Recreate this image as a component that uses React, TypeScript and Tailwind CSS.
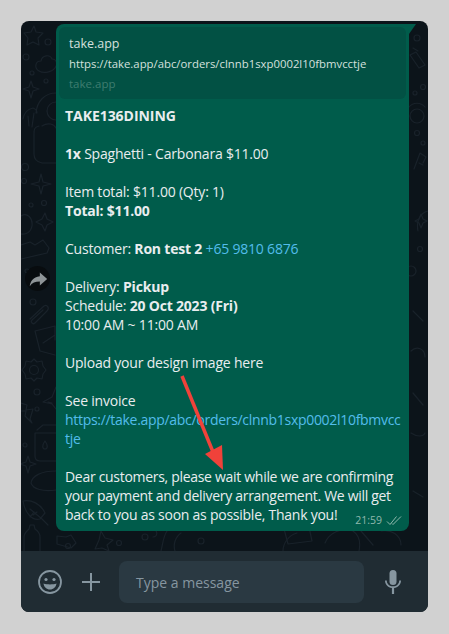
import React from 'react';

const Link = ({ children }: { children: React.ReactNode }) => (
  <span className="text-[#53bdeb]">{children}</span>
);

// faint wallpaper, only the strips around the bubble are visible
const Doodles = () => (
  <svg className="absolute inset-0 h-full w-full" viewBox="0 0 407 530" fill="none" stroke="#19222a" strokeWidth="1.2" strokeLinejoin="round" strokeLinecap="round">
    <path d="M13 5l2 6 7 1-5 5 1 7-6-3-6 3 1-7-4-5 7-1z" />
    <circle cx="27" cy="21" r="3" />
    <circle cx="5" cy="36" r="3" />
    <path d="M18 50c-5-3-4-10 2-10 1-6 9-7 11-2 5 0 6 6 3 9-3 4-11 6-16 3z" />
    <circle cx="11" cy="52" r="2" />
    <circle cx="25" cy="60" r="2" />
    <path d="M10 60l2 6 6 2-6 2-2 7-2-7-6-2 6-2z" />
    <path d="M15 92c1-12 9-20 20-20M2 98c1-6 5-10 10-11 3 1 4 3 4 5M7 95l1 10M13 92l-2 14M18 105c-5 1-5 4-5 8v20c0 5 3 8 8 9h14M21 105c6-4 12-2 14 2" />
    <circle cx="35" cy="90" r="9" />
    <circle cx="4" cy="146" r="3.500" />
    <circle cx="3" cy="160" r="2.500" />
    <path d="M20 153l2 8 8 2-8 2-2 8-2-8-8-2 8-2z" />
    <circle cx="10" cy="184" r="2" />
    <circle cx="23" cy="182" r="2.500" />
    <path d="M24 192l2 6 6 3-6 3-2 6-3-6-6-3 6-3z" />
    <path d="M0 195c6-4 12 2 11 10-1 6-6 9-11 8M0 224l9-3 5 3 8-5 6 8-2 5-26 6" />
    <circle cx="6" cy="250" r="2" />
    <circle cx="17" cy="248" r="2" />
    <circle cx="12" cy="281" r="3" />
    <path d="M9 298l14-13c3-2 6 2 3 5l-12 12c-2 2-5-1-3-3l11-10" />
    <path d="M14 310l20-5v14M14 310l5 20 15 4M22 322l12-8" />
    <circle cx="13" cy="349" r="4.500" />
    <path d="M13 338l3 3 5-1 1 5 3 4-3 4-1 5-5-1-3 3-3-3-5 1-1-5-3-4 3-4 1-5 5 1z" />
    <circle cx="16" cy="371" r="3" />
    <path d="M35 366l-4 10-9 5 9 2 4 5M27 381l4 1" />
    <path d="M0 382l6 2-1 5 7-1-3 10 2 4-7-7 1-5-5 0" />
    <circle cx="16" cy="388" r="2" />
    <path d="M16 409l6-5h13M14 412h21M14 412v23c0 3 2 5 5 5h16M24 420c-3 4-3 8 0 8s3-4 0-8z" />
    <circle cx="4" cy="424" r="2" />
    <path d="M7 435l2 6 6 2-6 2-2 7-2-7-6-2 6-2z" />
    <path d="M10 462c1-7 10-12 25-12M10 462c2 6 12 9 25 7" />
    <path d="M2 480c8-2 18 3 22 12l-5 6c-8 2-15-6-17-18zM9 488l12 10M21 498l6 6M12 494l4-3M13 491l-4 5" />
    <path d="M3 530v-14c0-4 3-6 5-8l1-4h4l1 4c3 2 5 4 5 8v14" />
    <circle cx="396" cy="17" r="3" />
    <path d="M389 34l6-3 9 13-6 3zM392 27l5 3" />
    <circle cx="402" cy="66" r="2.500" />
    <circle cx="394" cy="72" r="2" />
    <circle cx="396" cy="95" r="7" />
    <path d="M388 86c4-5 12-5 16 0" />
    <circle cx="396" cy="112" r="2.500" />
    <circle cx="402" cy="122" r="2" />
    <path d="M393 148l6-16 6 4-3 6M398 142l4 2" />
    <path d="M407 190c-8 2-12 10-10 20" />
    <path d="M400 193l2 5 4 2-4 2-2 5-2-5-4-2 4-2z" />
    <circle cx="399" cy="228" r="2.500" />
    <circle cx="390" cy="250" r="5" />
    <path d="M392 290l10 10M390 330c6-6 14-2 14 6M392 372l10 12M390 412c6 4 12 4 14 0M392 470l10 6" />
    <path d="M36 515l9 1 5-2 5 8-5 5-14-4zM74 528l4-9 2-9 4 7 8 2-6 5 2 6-7-3zM132 508c6 2 4 8 0 8" />
    <circle cx="47" cy="525" r="2.500" />
    <circle cx="124" cy="516" r="3" />
    <circle cx="98" cy="522" r="2.500" />
    <path d="M140 530c2-8 2-14 6-20M154 530c-2-6 0-14 6-18M262 530c0-8 6-16 14-18" />
    <circle cx="180" cy="520" r="3" />
    <path d="M262 504l26 2 3 14-24 3zM304 522c4-10 16-16 28-12 6 4 8 10 6 20M340 510l12 14M360 510c10-2 20 4 20 14" />
  </svg>
);

export default function App() {
  return (
    <div className="h-[634px] w-[449px] bg-[#d1d1d1] pl-[21px] pt-[21px] font-['Open_Sans','Noto_Sans',sans-serif]">
      <div className="relative flex h-[591px] w-[407px] flex-col overflow-hidden rounded-lg bg-[#0c141a]">
        <div className="relative h-[530px] pl-[35px] pt-[3px]">
          <Doodles />
          <div className="absolute left-[4px] top-[245px] flex h-[25px] w-[25px] items-center justify-center rounded-full bg-[#080c0f]">
            <svg viewBox="0 0 24 24" className="h-[22px] w-[22px]" fill="#8e9497">
              <path d="M14 5l8 7-8 7v-4.200c-5 0-8.600 1.500-11 5 .8-5.300 3.600-10 11-10.800z" />
            </svg>
          </div>
          <div className="relative h-[507px] w-[353px] rounded-l-lg rounded-br-lg rounded-tr-none bg-[#005c4b] p-[3px] text-[14px] leading-[19px] text-[#e9edef]">
            <div className="absolute -right-[7px] top-0 h-0 w-0 border-r-[7px] border-t-[10px] border-r-transparent border-t-[#005c4b]" />
            <div className="h-[72px] rounded-md bg-[#025144] px-[10px] pt-[7px]">
              <div className="text-[12.5px] leading-[20px] text-[#d5e0de]">take.app</div>
              <div className="text-[11.350px] leading-[20px] text-[#d5e0de]">https://take.app/abc/orders/clnnb1sxp0002l10fbmvcctje</div>
              <div className="text-[11.500px] leading-[20px] text-[#3f7d70]">take.app</div>
            </div>
            <div className="relative px-[6px] pt-[7px] tracking-[-0.2px]">
              <div className="font-bold tracking-[-0.05px]">TAKE136DINING</div>
              <div className="mt-[19px]"><b>1x</b> Spaghetti - Carbonara $11.00</div>
              <div className="mt-[19px]">Item total: $11.00 (Qty: 1)</div>
              <div className="font-bold">Total: $11.00</div>
              <div className="mt-[19px]">Customer: <b>Ron test 2</b> <Link>+65 9810 6876</Link></div>
              <div className="mt-[19px]">Delivery: <b>Pickup</b></div>
              <div>Schedule: <b>20 Oct 2023 (Fri)</b></div>
              <div>10:00 AM ~ 11:00 AM</div>
              <div className="mt-[19px]">Upload your design image here</div>
              <div className="mt-[19px]">See invoice</div>
              <div className="whitespace-nowrap tracking-[-0.3px]"><Link>https://take.app/abc/orders/clnnb1sxp0002l10fbmvcc<br />tje</Link></div>
              <div className="mt-[19px] whitespace-nowrap tracking-[-0.3px]">Dear customers, please wait while we are confirming</div>
              <div className="whitespace-nowrap tracking-[-0.3px]">your payment and delivery arrangement. We will get</div>
              <div className="whitespace-nowrap tracking-[-0.25px]">back to you as soon as possible, Thank you!</div>
            </div>
            <div className="absolute bottom-[3px] right-[7px] flex items-center gap-1 text-[10.5px] leading-[15px] text-[#8fb8ad]">
              <span>21:59</span>
              <svg viewBox="0 0 16 11" className="h-[11px] w-[16px]" fill="none" stroke="#8fb8ad" strokeWidth="1">
                <path d="M1 6.500l3 3L10.500 1.500M6 8.500l1 1L15 1.500" />
              </svg>
            </div>
          </div>
        </div>
        <div className="flex h-[61px] items-center bg-[#202c33] pl-[17px]">
          <svg viewBox="0 0 24 24" className="h-6 w-6" fill="none" stroke="#8696a0" strokeWidth="1.800">
            <circle cx="12" cy="12" r="11" />
            <circle cx="8" cy="9.500" r="1.600" fill="#8696a0" stroke="none" />
            <circle cx="16" cy="9.500" r="1.600" fill="#8696a0" stroke="none" />
            <path d="M5.500 13.500c3.500 1.200 9.500 1.200 13 0-.5 3.500-3 6-6.500 6s-6-2.500-6.500-6z" fill="#8696a0" stroke="none" />
          </svg>
          <svg viewBox="0 0 18 18" className="ml-5 h-[18px] w-[18px]" fill="none" stroke="#8696a0" strokeWidth="2">
            <path d="M9 0v18M0 9h18" />
          </svg>
          <div className="ml-[19px] flex h-[42px] w-[245px] items-center rounded-lg bg-[#2a3942] pl-[17px] pt-[2px] text-[14px] text-[#8696a0]">
            Type a message
          </div>
          <svg viewBox="0 0 18 24" className="ml-5 h-[24px] w-[18px]" fill="#8696a0">
            <rect x="5.500" y="0" width="7" height="15" rx="3.500" />
            <path d="M1 10.500h1.800c0 3.500 2.700 5.800 6.200 5.800s6.200-2.300 6.200-5.800H17c0 4-3 7-6.900 7.500V24H7.900v-6C4 17.500 1 14.500 1 10.500z" />
          </svg>
        </div>
        <svg className="absolute left-[140px] top-[350px] h-[120px] w-[70px]" viewBox="0 0 70 120" fill="none">
          <path d="M21 5l31 76" stroke="#f0423a" strokeWidth="3.500" />
          <path d="M44 83l17-9 1 25z" fill="#f0423a" />
        </svg>
      </div>
    </div>
  );
}
